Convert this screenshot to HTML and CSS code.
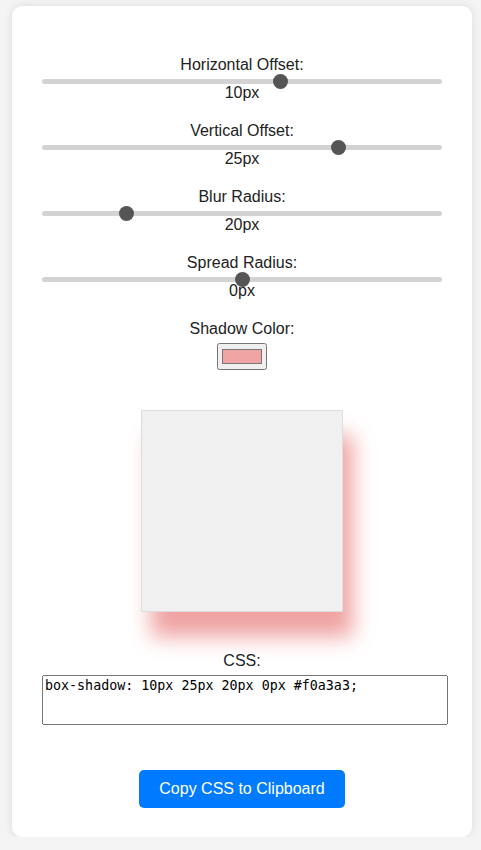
FILE: index.html
```html
<!DOCTYPE html>
<html>
<head>
<meta charset="utf-8">
<link rel="stylesheet" href="styles.css">
</head>
<body>
<div class="card">
  <div class="control">
    <label class="lbl" for="h">Horizontal Offset:</label>
    <input class="range" id="h" type="range" min="-50" max="50" value="10">
    <span class="val">10px</span>
  </div>
  <div class="control">
    <label class="lbl" for="v">Vertical Offset:</label>
    <input class="range" id="v" type="range" min="-50" max="50" value="25">
    <span class="val">25px</span>
  </div>
  <div class="control">
    <label class="lbl" for="b">Blur Radius:</label>
    <input class="range" id="b" type="range" min="0" max="100" value="20">
    <span class="val">20px</span>
  </div>
  <div class="control">
    <label class="lbl" for="s">Spread Radius:</label>
    <input class="range" id="s" type="range" min="-50" max="50" value="0">
    <span class="val">0px</span>
  </div>
  <div class="control">
    <label class="lbl" for="c">Shadow Color:</label>
    <div class="colorrow"><input class="color" id="c" type="color" value="#f0a3a3"></div>
  </div>
  <div class="preview"></div>
  <div class="control">
    <label class="lbl" for="css">CSS:</label>
    <div class="textrow"><textarea class="code" id="css" readonly>box-shadow: 10px 25px 20px 0px #f0a3a3;</textarea></div>
  </div>
  <div class="btnrow"><button class="copy">Copy CSS to Clipboard</button></div>
</div>
</body>
</html>
```
FILE: styles.css
```css
html, body {
  margin: 0;
  padding: 0;
}
body {
  background: #f4f4f4;
  font-family: "Liberation Sans", Arial, sans-serif;
  color: #222;
  padding: 6px 0 0 12px;
}
.card {
  width: 400px;
  padding: 30px 30px 29px;
  background: #fff;
  border-radius: 10px;
  box-shadow: 0 0 10px rgba(0, 0, 0, 0.1);
  text-align: center;
}
.control {
  margin: 20px 0;
}
.lbl {
  display: block;
  font-size: 16px;
}
.range {
  -webkit-appearance: none;
  appearance: none;
  display: block;
  width: 100%;
  height: 5px;
  margin: 5px 0 4px;
  background: #d3d3d3;
  border-radius: 5px;
  outline: none;
}
.range::-webkit-slider-thumb {
  -webkit-appearance: none;
  appearance: none;
  width: 15px;
  height: 15px;
  border-radius: 50%;
  background: #555;
  cursor: pointer;
}
.val {
  display: block;
  font-size: 16px;
  margin-top: -4px;
}
.colorrow {
  margin-top: 5px;
  height: 27px;
}
.color {
  margin: 0;
  vertical-align: top;
}
.preview {
  width: 200px;
  height: 200px;
  margin: 40px auto 40px;
  background: #f0f0f0;
  border: 1px solid #ddd;
  box-shadow: 10px 25px 20px 0px #f0a3a3;
}
.textrow {
  margin-top: 5px;
  text-align: left;
}
.code {
  display: block;
  width: 100%;
  height: 44px;
  margin: 0;
  resize: none;
  font-family: "DejaVu Sans Mono", monospace;
  font-size: 13.333px;
}
.btnrow {
  padding-top: 25px;
}
.copy {
  background: #007bff;
  color: #fff;
  border: none;
  border-radius: 5px;
  padding: 10px 20px;
  font-family: "Liberation Sans", Arial, sans-serif;
  font-size: 16px;
}
```
